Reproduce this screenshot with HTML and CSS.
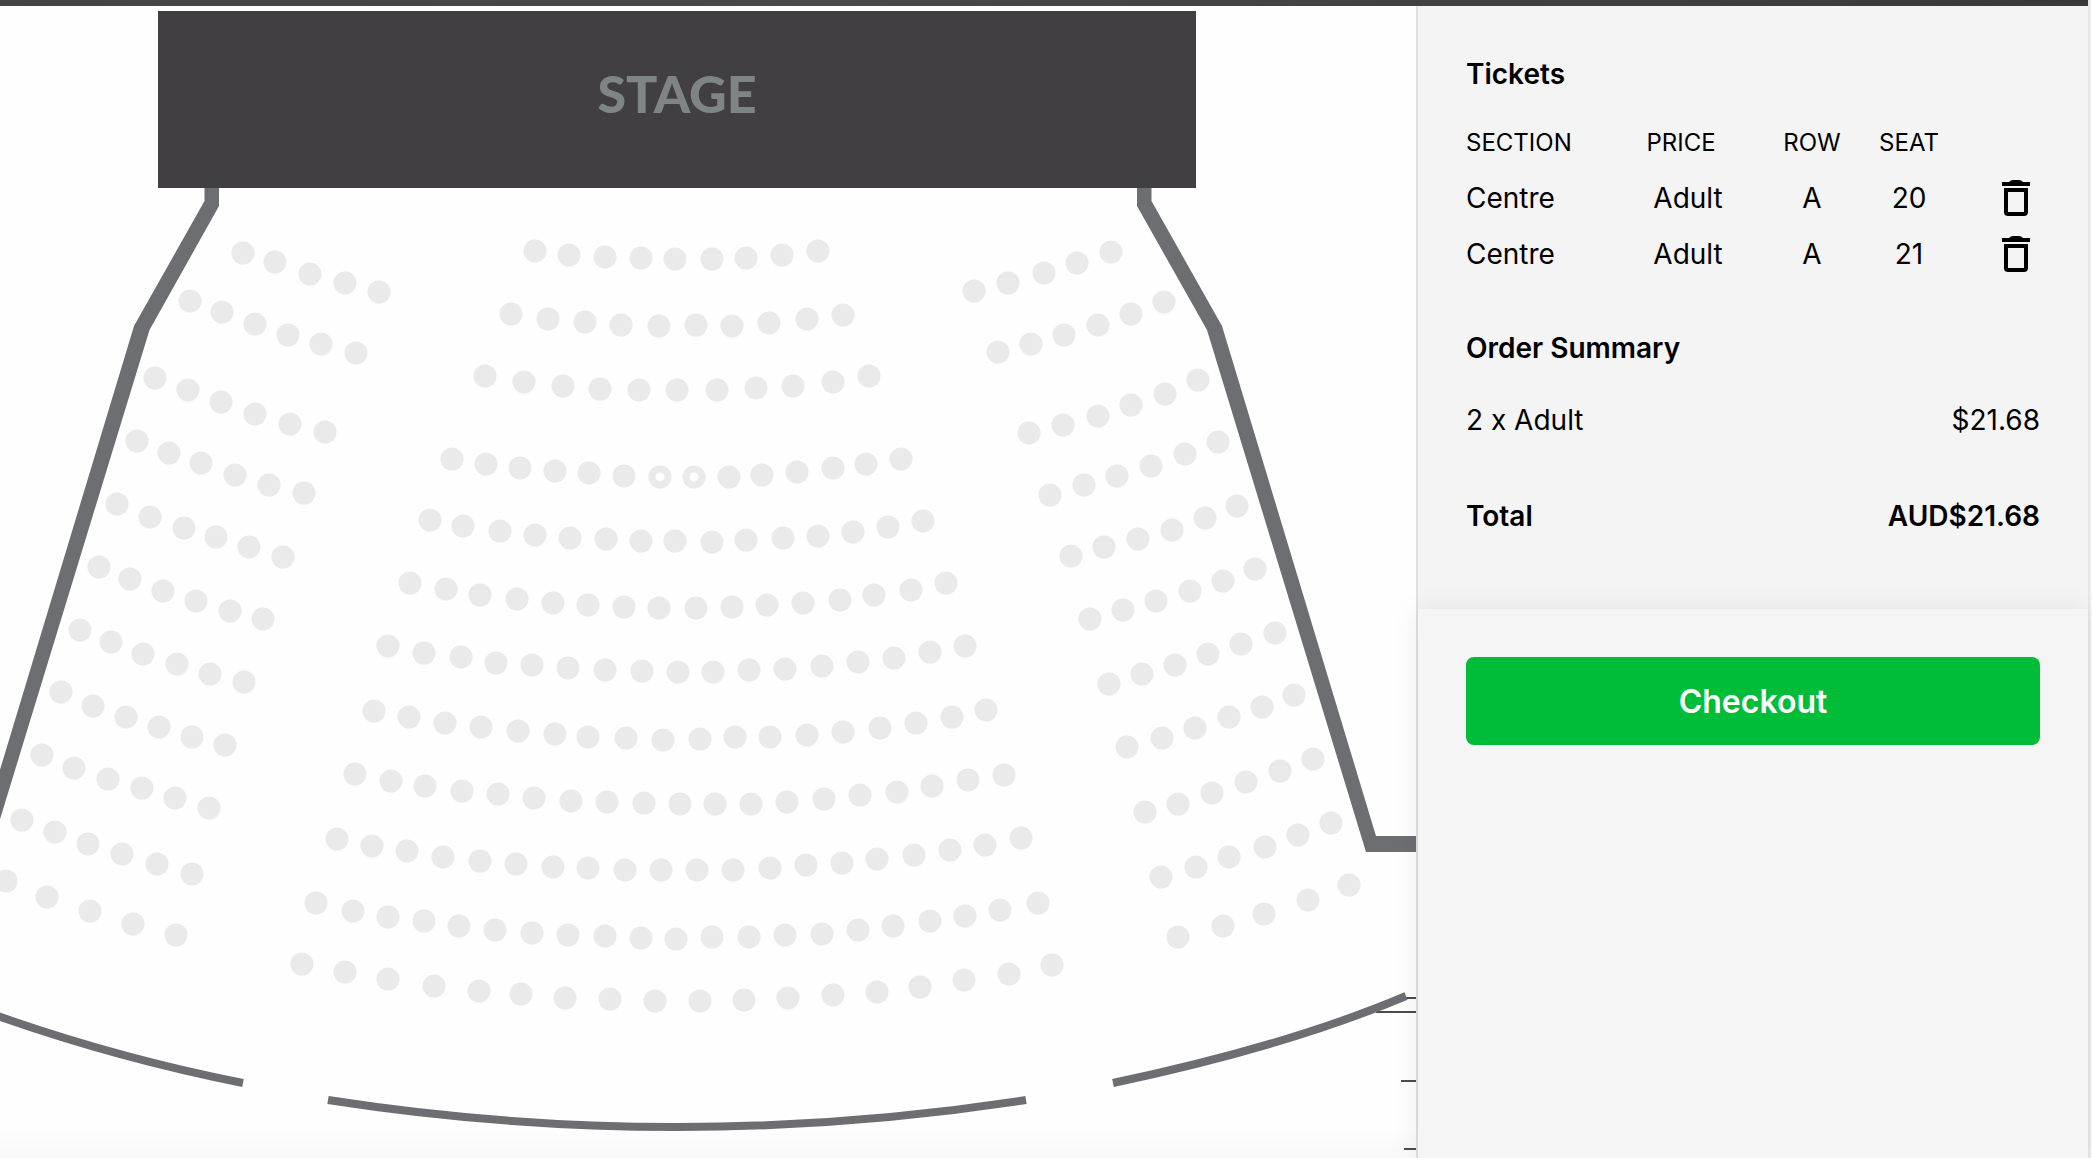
FILE: index.html
```html
<!DOCTYPE html>
<html lang="en">
<head>
<meta charset="utf-8">
<meta name="viewport" content="width=device-width, initial-scale=1">
<title>Select seats</title>
<link rel="stylesheet" href="styles.css">
</head>
<body>
<div class="page">
  <div class="topbar"></div>
  <div class="booking">
    <main class="map">
      <svg class="map-drawing" viewBox="0 6 1416 1152" preserveAspectRatio="xMinYMin slice" role="img" aria-label="Seating map">
        <defs>
          <marker id="seat" viewBox="0 0 24 24" refX="12" refY="12" markerWidth="24" markerHeight="24" markerUnits="userSpaceOnUse">
            <circle class="seat" cx="12" cy="12" r="11.5"/>
          </marker>
          <marker id="chosen" viewBox="0 0 24 24" refX="12" refY="12" markerWidth="24" markerHeight="24" markerUnits="userSpaceOnUse">
            <circle class="seat-chosen" cx="12" cy="12" r="8"/>
          </marker>
        </defs>

        <!-- walls -->
        <path class="wall" d="M219 187H204.500V201L134 326L-20 836V852H-10L149.500 330L219 206Z"/>
        <path class="wall" d="M1137 187H1151.500V201L1222 326L1376 836H1430V852H1366L1207 330L1137 206Z"/>
        <path class="ledge" d="M1404 998H1430M1376 1012H1430M1401 1081H1430M1404 1149H1430"/>
        <path class="rear" d="M-8 1014Q116 1058 243 1083M328 1100Q677 1154 1026 1100M1113 1083Q1288 1046 1406 996"/>

        <!-- stage -->
        <rect class="stage" x="158" y="11" width="1038" height="177"/>
        <text class="stage-label" x="677" y="113">STAGE</text>

        <!-- left block -->
        <g class="rows">
          <polyline points="243,253 275,262 310,274 345,283 379,292"/>
          <polyline points="190,301 222,312 255,324 288,335 321,344 356,353"/>
          <polyline points="155,378 188,390 221,402 255,414 290,424 325,432"/>
          <polyline points="137,441 169,453 201,463 235,475 269,485 304,493"/>
          <polyline points="117,504 150,517 184,528 216,537 249,547 283,557"/>
          <polyline points="99,567 130,579 163,591 196,601 230,611 263,619"/>
          <polyline points="80,630 111,642 143,654 177,664 210,674 244,682"/>
          <polyline points="61,692 93,706 126,717 159,727 192,737 225,745"/>
          <polyline points="42,755 74,768 108,779 142,788 175,798 209,808"/>
          <polyline points="22,820 55,832 88,844 122,854 157,864 192,874"/>
          <polyline points="6,881 47,897 90,911 133,924 176,935"/>
        </g>

        <!-- centre block -->
        <g class="rows">
          <polyline points="535,251 569,255 605,257 641,258 675,259 712,259 746,258 782,255 818,251"/>
          <polyline points="511,314 548,319 585,322 621,325 659,326 696,325 732,326 769,323 807,319 843,315"/>
          <polyline points="485,376 524,382 563,386 600,389 639,390 677,390 717,390 756,388 793,386 833,382 869,376"/>
          <polyline points="452,459 486,464 520,468 555,471 589,473 624,476"/>
          <polyline class="row-chosen" points="660,477 694,477"/>
          <polyline points="729,477 762,475 797,472 833,468 866,464 901,459"/>
          <polyline points="430,520 463,526 500,531 535,535 570,538 606,539 641,541 675,541 712,542 746,540 783,538 818,536 853,532 888,527 923,521"/>
          <polyline points="410,583 446,589 480,595 517,599 553,603 588,605 624,607 659,608 696,608 732,607 767,605 803,603 840,600 874,595 911,590 946,583"/>
          <polyline points="388,646 424,653 461,657 496,663 532,665 568,668 605,670 642,671 678,672 713,672 749,670 785,669 822,666 858,662 894,658 930,652 965,646"/>
          <polyline points="374,711 409,717 445,723 481,727 518,731 555,734 588,737 626,738 663,740 700,739 735,737 770,737 807,735 843,732 880,728 916,723 952,717 986,710"/>
          <polyline points="355,774 391,781 425,786 462,791 498,794 534,798 571,801 607,802 644,803 680,804 715,804 751,804 787,802 824,799 860,795 897,792 932,786 968,780 1004,775"/>
          <polyline points="337,839 372,846 407,851 443,857 480,861 516,864 553,867 588,868 625,870 661,870 697,870 733,870 770,868 806,865 842,863 877,859 914,855 950,850 985,845 1021,838"/>
          <polyline points="316,903 353,911 388,917 424,921 459,926 495,930 532,933 568,935 605,936 641,938 676,939 712,937 749,937 785,935 822,934 858,930 893,926 930,921 965,916 1000,910 1038,903"/>
          <polyline points="302,964 345,972 388,979 434,986 479,991 521,994 565,998 610,999 655,1001 700,1001 744,1000 788,998 833,995 877,992 920,987 964,980 1009,974 1052,965"/>
        </g>

        <!-- right block -->
        <g class="rows">
          <polyline points="974,291 1008,283 1044,273 1077,263 1111,252"/>
          <polyline points="998,352 1031,344 1064,335 1098,325 1131,314 1164,302"/>
          <polyline points="1029,433 1063,425 1098,416 1131,405 1165,394 1198,380"/>
          <polyline points="1050,495 1084,485 1117,476 1151,466 1185,454 1218,442"/>
          <polyline points="1071,556 1104,547 1138,539 1172,530 1205,518 1237,506"/>
          <polyline points="1090,619 1123,610 1156,601 1190,591 1223,581 1255,569"/>
          <polyline points="1109,684 1142,674 1175,665 1208,654 1241,644 1275,633"/>
          <polyline points="1127,747 1162,738 1195,728 1229,717 1262,707 1294,695"/>
          <polyline points="1145,812 1178,804 1212,793 1246,782 1280,771 1313,759"/>
          <polyline points="1161,877 1196,867 1229,857 1265,847 1298,835 1331,823"/>
          <polyline points="1178,937 1223,926 1264,914 1308,900 1349,885"/>
        </g>
      </svg>
    </main>

    <aside class="cart">
      <section class="details">
        <h2 class="heading">Tickets</h2>
        <table class="tickets">
          <colgroup>
            <col class="col-section"><col class="col-price"><col class="col-row"><col class="col-seat"><col class="col-action">
          </colgroup>
          <thead>
            <tr><th scope="col">SECTION</th><th scope="col" class="th-price">PRICE</th><th scope="col">ROW</th><th scope="col">SEAT</th><td></td></tr>
          </thead>
          <tbody>
            <tr>
              <td>Centre</td><td>Adult</td><td>A</td><td>20</td>
              <td><button class="remove" type="button" aria-label="Remove seat A20"><svg class="bin" viewBox="0 0 28 36" aria-hidden="true"><path fill-rule="evenodd" d="M0 2H7Q9 0 11 0H17Q19 0 21 2H28V6H0ZM2 8H26V32Q26 36 22 36H6Q2 36 2 32ZM6 12V32H22V12Z"/></svg></button></td>
            </tr>
            <tr>
              <td>Centre</td><td>Adult</td><td>A</td><td>21</td>
              <td><button class="remove" type="button" aria-label="Remove seat A21"><svg class="bin" viewBox="0 0 28 36" aria-hidden="true"><path fill-rule="evenodd" d="M0 2H7Q9 0 11 0H17Q19 0 21 2H28V6H0ZM2 8H26V32Q26 36 22 36H6Q2 36 2 32ZM6 12V32H22V12Z"/></svg></button></td>
            </tr>
          </tbody>
        </table>
        <h2 class="heading summary-heading">Order Summary</h2>
        <div class="line"><span>2 x Adult</span><span>$21.68</span></div>
        <div class="line total"><span>Total</span><span>AUD$21.68</span></div>
      </section>
      <section class="actions">
        <button class="checkout" type="button">Checkout</button>
      </section>
    </aside>
  </div>
</div>
</body>
</html>
```
FILE: styles.css
```css
* {
  box-sizing: border-box;
}

body {
  margin: 0;
  background: #f5f5f5;
  color: #000;
  font-family: Inter, "Liberation Sans", sans-serif;
  font-size: 28px;
  line-height: 40px;
}

.page {
  display: flex;
  flex-direction: column;
  min-height: 100vh;
  margin-right: 2px;
  border-right: 2px solid #e6e6e6;
}

.topbar {
  height: 6px;
  background: linear-gradient(90deg, #444, #484848 40%, #393939);
}

.booking {
  flex: 1;
  display: flex;
}

/* Seating map */

.map {
  flex: 1;
  min-width: 0;
  display: grid;
  background: linear-gradient(to top, #f8f8f8, #fefefe 32px);
}

.map-drawing {
  width: 100%;
  height: 100%;
  min-height: 0;
  contain: size;
}

.wall {
  fill: #6d6e71;
}

.rear {
  fill: none;
  stroke: #6d6e71;
  stroke-width: 8;
}

.ledge {
  fill: none;
  stroke: #4c4c4e;
  stroke-width: 2;
}

.stage {
  fill: #423f42;
}

.stage-label {
  fill: #7f8486;
  font-family: Lato, sans-serif;
  font-size: 52px;
  font-weight: 900;
  text-anchor: middle;
}

.rows polyline {
  fill: none;
  stroke: none;
  marker: url(#seat);
}

.rows .row-chosen {
  marker: url(#chosen);
}

.seat {
  fill: #eaeaea;
}

.seat-chosen {
  fill: #fff;
  stroke: #eaeaea;
  stroke-width: 7;
}

/* Cart */

.cart {
  flex: 0 0 672px;
  display: flex;
  flex-direction: column;
  border-left: 2px solid #e0e0e0;
  background: #f4f4f4;
}

.details {
  padding: 48px 48px 73px;
}

.heading {
  margin: 0 0 20px;
  font-size: 28px;
  font-weight: 600;
}

.tickets {
  width: 100%;
  table-layout: fixed;
  border-collapse: collapse;
}

.tickets tr {
  height: 56px;
}

.tickets th,
.tickets td {
  padding: 0;
  text-align: center;
  vertical-align: middle;
}

.tickets th {
  padding-top: 2px;
  font-size: 24px;
  font-weight: 400;
}

.tickets th:first-child,
.tickets td:first-child {
  text-align: left;
}

.tickets .th-price {
  padding-right: 14px;
}

.tickets td:last-child {
  text-align: right;
}

.col-section {
  width: 146px;
}

.col-price {
  width: 152px;
}

.col-row {
  width: 96px;
}

.col-seat {
  width: 98px;
}

.remove {
  display: inline-flex;
  align-items: center;
  justify-content: center;
  width: 48px;
  height: 48px;
  padding: 0;
  border: 0;
  background: none;
  vertical-align: middle;
  cursor: pointer;
}

.bin {
  width: 28px;
  height: 36px;
}

.summary-heading {
  margin: 46px 0 32px;
}

.line {
  display: flex;
  justify-content: space-between;
}

.total {
  margin-top: 56px;
  font-weight: 600;
}

.actions {
  flex: 1;
  padding: 48px;
  background: #f5f5f5;
  box-shadow: 0 0 24px rgba(0, 0, 0, 0.08);
}

.checkout {
  width: 100%;
  height: 88px;
  padding: 2px 0 0;
  border: 0;
  border-radius: 8px;
  background: #00bd39;
  color: #fff;
  font: 600 32px/40px Inter, "Liberation Sans", sans-serif;
  cursor: pointer;
}
```
